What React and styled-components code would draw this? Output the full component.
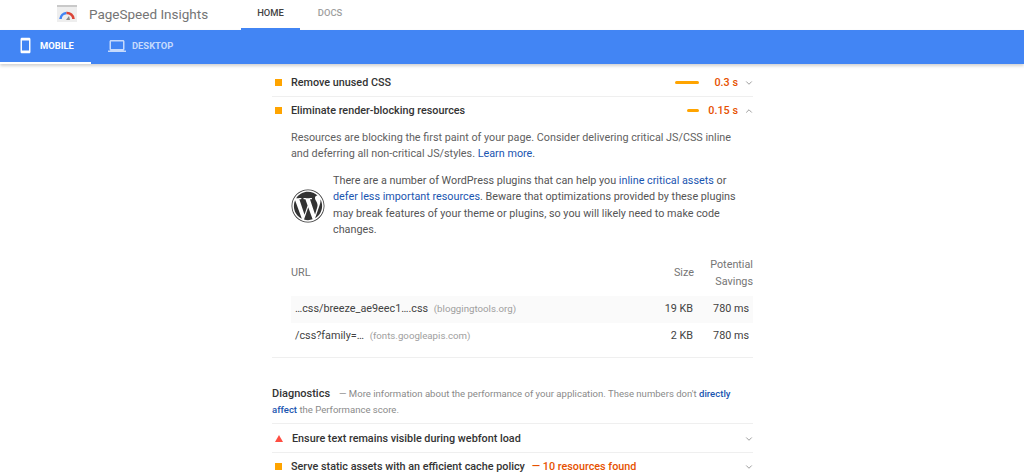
import React from 'react'
import styled, { createGlobalStyle } from 'styled-components'
import { ChevronDown, ChevronUp } from 'lucide-react'
import { MdSmartphone, MdLaptop } from 'react-icons/md'
import { FaWordpress } from 'react-icons/fa'

const Global = createGlobalStyle`
  html, body { margin: 0; padding: 0; background: #fff; }
  body { font-family: Roboto, "Liberation Sans", sans-serif; overflow: hidden; height: 475px; }
  * { box-sizing: border-box; }
`

const TopBar = styled.header`
  height: 30px;
  display: flex;
  align-items: stretch;
  padding-left: 57px;
  background: #fff;
`
const Brand = styled.div`
  display: flex;
  align-items: center;
  gap: 12px;
  width: 184px;
  font-size: 13.5px;
  color: #757575;
  padding-bottom: 3px;
`
const NavTab = styled.div`
  width: ${p => p.$w}px;
  display: flex;
  align-items: center;
  justify-content: center;
  font-size: 9.4px;
  font-weight: 500;
  padding-bottom: 3px;
  color: ${p => (p.$active ? '#424242' : '#9e9e9e')};
  border-bottom: 2px solid ${p => (p.$active ? '#4285f4' : 'transparent')};
`
const BlueBar = styled.nav`
  height: 34px;
  background: #4285f4;
  display: flex;
  box-shadow: 0 2px 3px rgba(0, 0, 0, 0.18);
`
const DeviceTab = styled.div`
  display: flex;
  align-items: center;
  gap: ${p => p.$gap}px;
  width: ${p => p.$w}px;
  padding-left: ${p => p.$pad}px;
  font-size: 9.4px;
  font-weight: 700;
  color: ${p => (p.$active ? '#fff' : '#c6dafc')};
  border-bottom: 2px solid ${p => (p.$active ? '#fff' : 'transparent')};
  padding-bottom: 1px;
`
const Main = styled.main`
  width: 481px;
  margin-left: 272px;
  padding-top: 5px;
`
const Row = styled.div`
  height: ${p => p.$h || 28}px;
  display: flex;
  align-items: center;
  padding: ${p => p.$top || 0}px 0 0 3px;
  font-size: 10.8px;
  font-weight: 500;
  color: #333;
  border-bottom: 1px solid ${p => (p.$noLine ? 'transparent' : '#efefef')};
`
const Square = styled.span`
  width: 7px;
  height: 7px;
  background: #ffa400;
  margin-right: 9px;
  flex: none;
`
const Triangle = styled.span`
  width: 0;
  height: 0;
  border-left: 4px solid transparent;
  border-right: 4px solid transparent;
  border-bottom: 7px solid #ff4e42;
  margin-right: 9px;
  flex: none;
`
const Title = styled.span`
  flex: 1;
  white-space: nowrap;
`
const Found = styled.span`
  color: #e65100;
  font-weight: 500;
  margin-left: 7px;
`
const SavingsBar = styled.span`
  width: ${p => p.$w}px;
  height: 3px;
  border-radius: 2px;
  background: #ffa400;
`
const SavingsValue = styled.span`
  width: 39px;
  text-align: right;
  color: #e65100;
  font-weight: 500;
  margin-right: 6px;
`
const Chevron = styled.span`
  display: flex;
  color: #8a8a8a;
  margin-right: -1px;
`
const Details = styled.section`
  padding-left: 19px;
  padding-top: 4px;
  font-size: 10.8px;
  line-height: 16.3px;
  color: #616161;
  border-bottom: 1px solid #efefef;
`
const Paragraph = styled.p`
  margin: 0;
  padding-top: 1px;
`
const Link = styled.a`
  color: #1a55b0;
`
const Plugin = styled.div`
  display: flex;
  align-items: center;
  gap: 8px;
  margin-top: 10px;
  color: #555;
  line-height: 16.5px;
  padding-right: 14px;
`
const WpIcon = styled.div`
  display: flex;
  color: #333;
  flex: none;
  margin-top: 1px;
`
const Table = styled.div`
  margin-top: 16px;
  padding-bottom: 7px;
`
const TableHead = styled.div`
  height: 38px;
  display: grid;
  grid-template-columns: 1fr 60px 59px;
  align-items: center;
  color: #757575;
  font-size: 10.8px;
  line-height: 16.8px;
  text-align: right;
  & > span:first-child { text-align: left; }
`
const TableRow = styled.div`
  height: 27px;
  display: grid;
  grid-template-columns: 1fr 60px 56px;
  align-items: center;
  padding: 0 4px;
  font-size: 10.8px;
  color: #424242;
  text-align: right;
  background: ${p => (p.$shade ? '#fafafa' : '#fff')};
  margin-top: ${p => p.$top || 0}px;
`
const UrlCell = styled.span`
  text-align: left;
  white-space: nowrap;
`
const Host = styled.span`
  color: #9e9e9e;
  font-size: 9.7px;
  margin-left: 3px;
`
const Diagnostics = styled.section`
  margin-top: 28px;
  font-size: 9.55px;
  line-height: 16.4px;
  color: #8a8a8a;
  padding-bottom: 5px;
  border-bottom: 1px solid #efefef;
`
const DiagTitle = styled.strong`
  color: #333;
  font-size: 11px;
  font-weight: 500;
  margin-right: 9px;
`
const DiagLink = styled.a`
  color: #1a55b0;
  font-weight: 500;
`

export default function App() {
  return (
    <>
      <Global />
      <TopBar>
        <Brand>
          <svg width="20" height="17" viewBox="0 0 20 17">
            <rect width="20" height="17" fill="#eeeeee" />
            <rect width="20" height="2" fill="#c9c9c9" />
            <path d="M3.5 14a6.5 6.5 0 0 1 6-6" fill="none" stroke="#4285f4" strokeWidth="2.6" />
            <path d="M9.5 8a6.5 6.5 0 0 1 7 6" fill="none" stroke="#db4437" strokeWidth="2.6" />
            <path d="M9 15l3-4 1 4z" fill="#8a8a8a" />
          </svg>
          PageSpeed Insights
        </Brand>
        <NavTab $w={59} $active>HOME</NavTab>
        <NavTab $w={60}>DOCS</NavTab>
      </TopBar>
      <BlueBar>
        <DeviceTab $active $w={91} $pad={17} $gap={6}>
          <MdSmartphone size={17} />
          MOBILE
        </DeviceTab>
        <DeviceTab $w={110} $pad={17} $gap={6}>
          <MdLaptop size={18} />
          DESKTOP
        </DeviceTab>
      </BlueBar>
      <Main>
        <Row>
          <Square />
          <Title>Remove unused CSS</Title>
          <SavingsBar $w={24} />
          <SavingsValue>0.3 s</SavingsValue>
          <Chevron><ChevronDown size={10} /></Chevron>
        </Row>
        <Row $noLine>
          <Square />
          <Title>Eliminate render-blocking resources</Title>
          <SavingsBar $w={12} />
          <SavingsValue>0.15 s</SavingsValue>
          <Chevron><ChevronUp size={10} /></Chevron>
        </Row>
        <Details>
          <Paragraph>
            Resources are blocking the first paint of your page. Consider delivering critical JS/CSS inline
            <br />
            and deferring all non-critical JS/styles. <Link>Learn more</Link>.
          </Paragraph>
          <Plugin>
            <WpIcon><FaWordpress size={34} /></WpIcon>
            <div>
              There are a number of WordPress plugins that can help you <Link>inline critical assets</Link> or{' '}
              <Link>defer less important resources</Link>. Beware that optimizations provided by these plugins
              may break features of your theme or plugins, so you will likely need to make code changes.
            </div>
          </Plugin>
          <Table>
            <TableHead>
              <span>URL</span>
              <span>Size</span>
              <span>Potential Savings</span>
            </TableHead>
            <TableRow $shade $top={3}>
              <UrlCell>…css/breeze_ae9eec1….css <Host>(bloggingtools.org)</Host></UrlCell>
              <span>19 KB</span>
              <span>780 ms</span>
            </TableRow>
            <TableRow>
              <UrlCell>/css?family=… <Host>(fonts.googleapis.com)</Host></UrlCell>
              <span>2 KB</span>
              <span>780 ms</span>
            </TableRow>
          </Table>
        </Details>
        <Diagnostics>
          <DiagTitle>Diagnostics</DiagTitle>
          — More information about the performance of your application. These numbers don't{' '}
          <DiagLink>directly affect</DiagLink> the Performance score.
        </Diagnostics>
        <Row $h={29} $top={1}>
          <Triangle />
          <Title>Ensure text remains visible during webfont load</Title>
          <Chevron><ChevronDown size={10} /></Chevron>
        </Row>
        <Row $noLine>
          <Square />
          <Title>Serve static assets with an efficient cache policy<Found>— 10 resources found</Found></Title>
          <Chevron><ChevronDown size={10} /></Chevron>
        </Row>
      </Main>
    </>
  )
}
